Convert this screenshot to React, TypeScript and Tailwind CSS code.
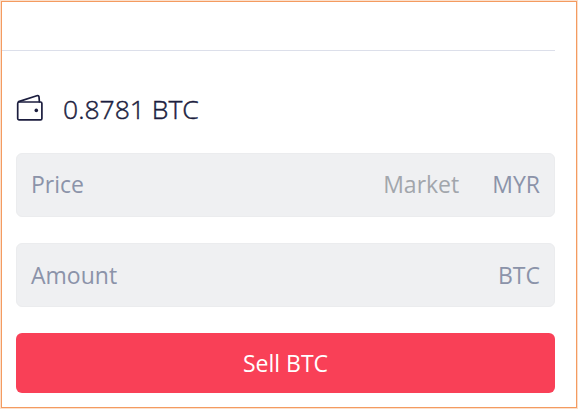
import type { ReactNode } from 'react';

interface FieldProps {
  label: string;
  className: string;
  children: ReactNode;
}

function WalletIcon() {
  return (
    <svg
      width="28"
      height="28"
      viewBox="0 0 28 28"
      fill="none"
      stroke="#1b1d3e"
      strokeWidth="1.7"
      strokeLinejoin="round"
      strokeLinecap="round"
    >
      <rect x="1.7" y="8" width="24.2" height="17.8" rx="1.4" />
      <path d="M2.6 7.6 20.8 1.7c1.3-.4 2.1.2 2.2 1.2l.4 4.9" />
      <circle cx="20.3" cy="16.4" r="1.8" fill="#1b1d3e" stroke="none" />
    </svg>
  );
}

function Field({ label, className, children }: FieldProps) {
  return (
    <div
      className={`flex items-center rounded-md border border-[#ebecee] bg-[#eff0f2] px-[14px] text-[#8b93a9] ${className}`}
    >
      <span className="flex-1">{label}</span>
      {children}
    </div>
  );
}

export default function App() {
  return (
    <div className="h-[409px] w-[578px] border border-[#fbe0cd] bg-white font-['Open_Sans','Noto_Sans',sans-serif] text-[23px] leading-8">
      <div className="h-full border border-[#f49b60]">
        {/* Bottom edge of the tab bar */}
        <div className="mr-[21px] h-[49px] border-b border-[#dcdfea]" />

        <div className="pr-[21px] pl-[14px]">
          <div className="flex h-[102px] items-center pt-[14px]">
            <div className="pb-[3px]">
              <WalletIcon />
            </div>
            <span className="ml-[19px] text-[26.5px] font-light text-[#1b1d3e] [-webkit-text-stroke:0.45px_#1b1d3e]">
              0.8781 BTC
            </span>
          </div>

          <Field label="Price" className="h-16 pb-[2px]">
            <span className="mr-[33px] text-[#a2a6ac]">Market</span>
            <span>MYR</span>
          </Field>
          <div className="h-[26px]" />
          <Field label="Amount" className="h-16">
            <span>BTC</span>
          </Field>

          <button className="mt-[26px] block h-[60px] w-full rounded-md bg-[#f94057] text-white">
            Sell BTC
          </button>
        </div>
      </div>
    </div>
  );
}
